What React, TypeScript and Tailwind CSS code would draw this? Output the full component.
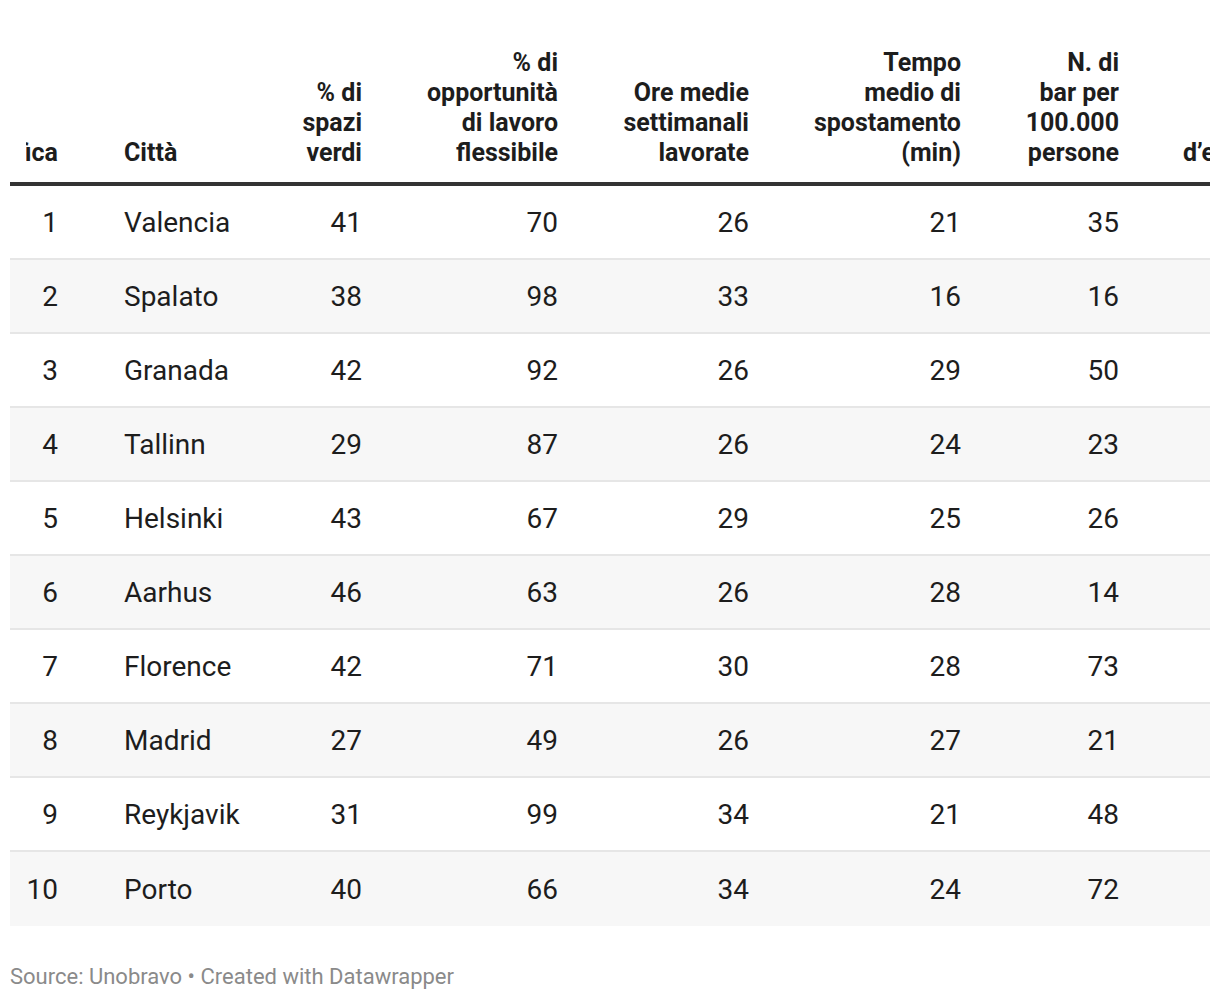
type Row = {
  rank: number;
  city: string;
  verdi: number;
  flex: number;
  ore: number;
  tempo: number;
  bar: number;
  extra: number;
};

const rows: Row[] = [
  { rank: 1, city: "Valencia", verdi: 41, flex: 70, ore: 26, tempo: 21, bar: 35, extra: 0 },
  { rank: 2, city: "Spalato", verdi: 38, flex: 98, ore: 33, tempo: 16, bar: 16, extra: 0 },
  { rank: 3, city: "Granada", verdi: 42, flex: 92, ore: 26, tempo: 29, bar: 50, extra: 0 },
  { rank: 4, city: "Tallinn", verdi: 29, flex: 87, ore: 26, tempo: 24, bar: 23, extra: 0 },
  { rank: 5, city: "Helsinki", verdi: 43, flex: 67, ore: 29, tempo: 25, bar: 26, extra: 0 },
  { rank: 6, city: "Aarhus", verdi: 46, flex: 63, ore: 26, tempo: 28, bar: 14, extra: 0 },
  { rank: 7, city: "Florence", verdi: 42, flex: 71, ore: 30, tempo: 28, bar: 73, extra: 0 },
  { rank: 8, city: "Madrid", verdi: 27, flex: 49, ore: 26, tempo: 27, bar: 21, extra: 0 },
  { rank: 9, city: "Reykjavik", verdi: 31, flex: 99, ore: 34, tempo: 21, bar: 48, extra: 0 },
  { rank: 10, city: "Porto", verdi: 40, flex: 66, ore: 34, tempo: 24, bar: 72, extra: 0 },
];

// column widths, in px, from the left edge of the scroll box
const gridCols = "grid grid-cols-[48px_192px_112px_196px_191px_212px_158px_188px] w-[1297px]";

function HeaderCell({ lines }: { lines: string[] }) {
  return (
    <div className="text-right">
      {lines.map((l, i) => (
        <div key={i} className="whitespace-nowrap">
          {l}
        </div>
      ))}
    </div>
  );
}

export default function App() {
  return (
    <div className="bg-white font-['Roboto',sans-serif] text-[#1d1d1d] px-[10px] w-[1220px] h-[1000px]">
      <div className="w-[1200px] overflow-hidden">
        <div className={`${gridCols} h-[182px] items-end pb-[14px] text-[25px] leading-[30px] font-bold`}>
          <div className="pl-[16px]">
            <div className="flex justify-end overflow-hidden whitespace-nowrap">
              <span>Classifica</span>
            </div>
          </div>
          <div className="pl-[66px]">Città</div>
          <HeaderCell lines={["% di", "spazi", "verdi"]} />
          <HeaderCell lines={["% di", "opportunità", "di lavoro", "flessibile"]} />
          <HeaderCell lines={["Ore medie", "settimanali", "lavorate"]} />
          <HeaderCell lines={["Tempo", "medio di", "spostamento", "(min)"]} />
          <HeaderCell lines={["N. di", "bar per", "100.000", "persone"]} />
          <HeaderCell lines={["Indice", "d’equilibrio"]} />
        </div>
        <div className="h-[4px] w-[1297px] bg-[#333333]" />
        {rows.map((r, i) => (
          <div
            key={r.rank}
            className={`${gridCols} h-[74px] items-center text-[28px] leading-[34px] pt-px ${
              i % 2 === 1 ? "bg-[#f7f7f7]" : "bg-white"
            } ${i === rows.length - 1 ? "h-[72px]" : "border-b-2 border-[#e6e6e6]"}`}
          >
            <div className="text-right">{r.rank}</div>
            <div className="pl-[66px]">{r.city}</div>
            <div className="text-right">{r.verdi}</div>
            <div className="text-right">{r.flex}</div>
            <div className="text-right">{r.ore}</div>
            <div className="text-right">{r.tempo}</div>
            <div className="text-right">{r.bar}</div>
            <div className="text-right">{r.extra}</div>
          </div>
        ))}
      </div>
      <div className="mt-[37px] text-[22px] leading-[28px] text-[#8a8a8a]">
        Source: Unobravo • Created with Datawrapper
      </div>
    </div>
  );
}
